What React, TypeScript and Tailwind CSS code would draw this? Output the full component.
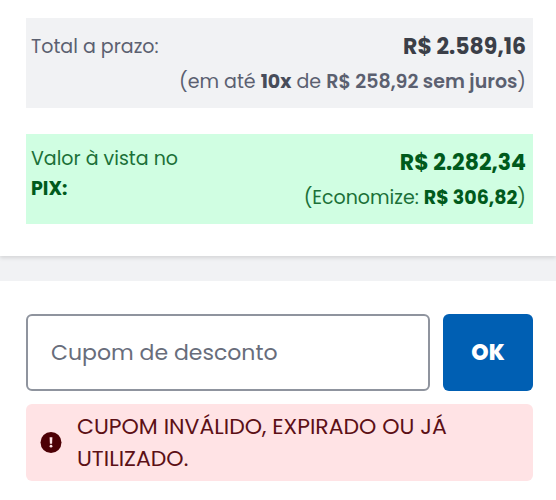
import { useState } from 'react';

interface AlertIconProps {
  className?: string;
}

const AlertIcon = ({ className }: AlertIconProps) => (
  <svg viewBox="0 0 22 22" className={className} aria-hidden="true">
    <circle cx="11" cy="10.5" r="10.5" fill="#4d0005" />
    <path d="M9.6 5.3h2.8l-.3 6.4H9.9z" fill="#ffe3e5" />
    <circle cx="11" cy="14.2" r="1.4" fill="#ffe3e5" />
  </svg>
);

const PriceSummary = () => (
  <section className="relative flex flex-col gap-[26px] bg-white pt-[18px] pr-[23px] pb-8 pl-[26px] shadow-[0_2px_4px_rgba(0,0,0,0.12)]">
    <div className="flex justify-between bg-[#f1f2f4] py-2.5 pr-[7px] pl-[5px] text-[#5b6070]">
      <div className="w-0 text-[19px] leading-[38px] whitespace-nowrap">Total a prazo:</div>
      <div className="text-right">
        <p className="text-[22px] leading-[38px] font-bold text-[#3b3f48]">R$ 2.589,16</p>
        <p className="text-[19px] leading-8">
          (em até <strong className="font-bold text-[#474c5a]">10x</strong> de{' '}
          <strong className="font-semibold">R$ 258,92 sem juros</strong>)
        </p>
      </div>
    </div>

    <div className="flex justify-between bg-[#d0fee2] py-2.5 pr-[7px] pl-[5px] text-[#1b7038]">
      <div className="text-[19px] leading-[30px]">
        Valor à vista no
        <strong className="block font-bold text-[#005a1c]">PIX:</strong>
      </div>
      <div className="text-right">
        <p className="text-[22px] leading-[38px] font-bold text-[#005a1c]">R$ 2.282,34</p>
        <p className="text-[19px] leading-8">
          (Economize: <strong className="font-bold text-[#005a1c]">R$ 306,82</strong>)
        </p>
      </div>
    </div>
  </section>
);

const CouponForm = () => {
  const [coupon, setCoupon] = useState('');

  return (
    <section className="bg-white pt-[33px] pr-[23px] pb-5 pl-[26px]">
      <form className="flex gap-[13px]" onSubmit={(e) => e.preventDefault()}>
        <input
          type="text"
          value={coupon}
          onChange={(e) => setCoupon(e.target.value)}
          placeholder="Cupom de desconto"
          aria-label="Cupom de desconto"
          className="h-[77px] min-w-0 flex-1 rounded-md border-2 border-[#8f949e] px-[23px] text-[22px] text-[#5b6070] placeholder:text-[#686d7b] focus:outline-none"
        />
        <button
          type="submit"
          className="w-[90px] rounded-md bg-[#005fb3] text-[22px] font-extrabold text-white hover:bg-[#00529c]"
        >
          OK
        </button>
      </form>

      <div role="alert" className="mt-[13px] flex items-center gap-[15px] rounded-md bg-[#ffe3e5] pt-[7px] pr-6 pb-1.5 pl-3.5 text-[#5c1016]">
        <AlertIcon className="h-[22px] w-[22px] shrink-0" />
        <p className="text-[22px] leading-8">CUPOM INVÁLIDO, EXPIRADO OU JÁ UTILIZADO.</p>
      </div>
    </section>
  );
};

const App = () => (
  <main className="flex flex-col gap-[25px] bg-[#f1f2f4] font-[Poppins,Inter,sans-serif]">
    <PriceSummary />
    <CouponForm />
  </main>
);

export default App;
